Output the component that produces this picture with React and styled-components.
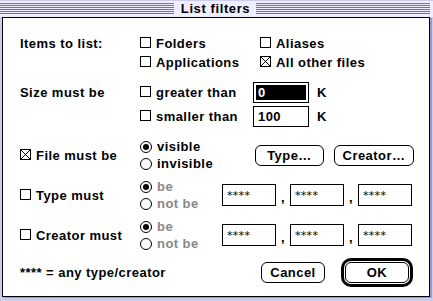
import styled, { createGlobalStyle } from "styled-components";

const GlobalStyle = createGlobalStyle`
  html, body {
    margin: 0;
    padding: 0;
    background: #ccccee;
  }
  * {
    box-sizing: border-box;
  }
`;

const Window = styled.div`
  width: 433px;
  height: 301px;
  background: #ccccee;
  display: flex;
  flex-direction: column;
  font-family: "Liberation Sans", Arial, sans-serif;
  font-weight: bold;
  font-size: 13px;
  letter-spacing: 0.45px;
  color: #000;
`;

const TitleBar = styled.div`
  height: 17px;
  display: flex;
  align-items: center;
  padding: 0 3px 1px 0;
  background: #eeeeff;
  border-top: 1px solid #ccccee;
`;

const Stripes = styled.div`
  flex: 1;
  height: 12px;
  background: repeating-linear-gradient(
    to bottom,
    #777777 0px,
    #777777 1px,
    #eeeeff 1px,
    #eeeeff 2px
  );
`;

const Title = styled.div`
  padding: 0 6px 0 7px;
  line-height: 14px;
  letter-spacing: 0.6px;
`;

const Content = styled.div`
  flex: 1;
  margin: 0 3px 4px 2px;
  background: #fff;
  border: 1px solid #000;
  box-shadow: 2px 1px 0 #9a9acc;
  padding: 0 16px 0 17px;
  display: flex;
  flex-direction: column;
`;

const Section = styled.div`
  display: flex;
  align-items: center;
  margin-top: ${(p) => p.$top}px;
`;

const Label = styled.div`
  width: ${(p) => p.$w || 120}px;
  flex-shrink: 0;
  display: flex;
  align-items: center;
  align-self: ${(p) => (p.$start ? "flex-start" : "center")};
  height: ${(p) => (p.$h ? p.$h + "px" : "auto")};
`;

const ItemGrid = styled.div`
  display: grid;
  grid-template-columns: 120px auto;
  grid-auto-rows: 19px;
  align-items: center;
`;

const SizeGrid = styled.div`
  display: grid;
  grid-template-columns: 120px 113px 56px auto;
  grid-template-rows: 21px 21px;
  row-gap: 3px;
  align-items: center;
`;

const Option = styled.label`
  display: flex;
  align-items: center;
  gap: 5px;
  white-space: nowrap;
  color: ${(p) => (p.$dim ? "#888888" : "#000")};
`;

const Box = styled.span`
  width: 11px;
  height: 11px;
  border: 1px solid #000;
  background: #fff;
  flex-shrink: 0;
  display: block;
  position: relative;
  top: -1px;
`;

const Circle = styled.span`
  width: 12px;
  height: 12px;
  border: 1px solid #000;
  border-radius: 50%;
  background: #fff;
  flex-shrink: 0;
  display: flex;
  align-items: center;
  justify-content: center;

  &::after {
    content: "";
    display: ${(p) => (p.$on ? "block" : "none")};
    width: 6px;
    height: 6px;
    border-radius: 50%;
    background: #000;
  }
`;

const RadioCol = styled.div`
  width: ${(p) => p.$w}px;
  flex-shrink: 0;
  display: grid;
  grid-auto-rows: 17px;
  align-items: center;
`;

const Field = styled.div`
  height: ${(p) => p.$h || 21}px;
  border: 1px solid #000;
  padding: 2px;
  display: flex;
`;

const FieldText = styled.div`
  flex: 1;
  display: flex;
  align-items: center;
  padding-left: 2px;
  background: ${(p) => (p.$selected ? "#000" : "#fff")};
  color: ${(p) => (p.$selected ? "#fff" : "#000")};
  font-weight: ${(p) => (p.$thin ? "normal" : "bold")};
  font-size: ${(p) => (p.$thin ? "11px" : "13px")};
  font-family: ${(p) =>
    p.$thin ? '"DejaVu Sans", Verdana, sans-serif' : "inherit"};
  letter-spacing: ${(p) => (p.$thin ? "0.3px" : "0.45px")};
`;

const Unit = styled.span`
  padding-left: 8px;
`;

const CodeFields = styled.div`
  width: 190px;
  display: grid;
  grid-template-columns: 1fr 14px 1fr 14px 1fr;
  align-items: center;
`;

const Comma = styled.span`
  text-align: center;
  padding-top: 4px;
`;

const Buttons = styled.div`
  display: flex;
  align-items: center;
  gap: ${(p) => p.$gap}px;
  margin-left: ${(p) => p.$left || 0}px;
`;

const Button = styled.button`
  width: ${(p) => p.$w}px;
  height: 21px;
  border: 1px solid #000;
  border-radius: 6px;
  background: #fff;
  font: inherit;
  letter-spacing: inherit;
  color: #000;
  padding: 0;
  display: flex;
  align-items: center;
  justify-content: center;
`;

const DefaultRing = styled.div`
  border: 3px solid #000;
  border-radius: 10px;
  padding: 1px;
  display: flex;
`;

const Footer = styled.div`
  margin-top: 6px;
  height: 28px;
  display: flex;
  align-items: center;
  justify-content: space-between;
`;

const Note = styled.span`
  font-weight: bold;
`;

function Check({ on }) {
  return (
    <Box>
      {on && (
        <svg
          width="9"
          height="9"
          viewBox="0 0 9 9"
          style={{ position: "absolute", left: 0, top: 0 }}
        >
          <path d="M0 0L9 9M9 0L0 9" stroke="#000" strokeWidth="1" />
        </svg>
      )}
    </Box>
  );
}

function CheckOption({ on, children }) {
  return (
    <Option>
      <Check on={on} />
      {children}
    </Option>
  );
}

function Radio({ on, dim, children }) {
  return (
    <Option $dim={dim}>
      <Circle $on={on} />
      {children}
    </Option>
  );
}

function CodeRow({ label }) {
  return (
    <Section $top={6}>
      <Label>
        <CheckOption>{label}</CheckOption>
      </Label>
      <RadioCol $w={82}>
        <Radio on dim>
          be
        </Radio>
        <Radio dim>not be</Radio>
      </RadioCol>
      <CodeFields>
        {["****", ",", "****", ",", "****"].map((t, i) =>
          t === "," ? (
            <Comma key={i}>,</Comma>
          ) : (
            <Field key={i} $h={22}>
              <FieldText $thin>{t}</FieldText>
            </Field>
          )
        )}
      </CodeFields>
    </Section>
  );
}

export default function App() {
  return (
    <>
      <GlobalStyle />
      <Window>
        <TitleBar>
          <Stripes />
          <Title>List filters</Title>
          <Stripes />
        </TitleBar>

        <Content>
          <Section $top={16}>
            <Label $start $h={19}>
              Items to list:
            </Label>
            <ItemGrid>
              <CheckOption>Folders</CheckOption>
              <CheckOption>Aliases</CheckOption>
              <CheckOption>Applications</CheckOption>
              <CheckOption on>All other files</CheckOption>
            </ItemGrid>
          </Section>

          <Section $top={10}>
            <SizeGrid>
              <span>Size must be</span>
              <CheckOption>greater than</CheckOption>
              <Field>
                <FieldText $selected>0</FieldText>
              </Field>
              <Unit>K</Unit>
              <span />
              <CheckOption>smaller than</CheckOption>
              <Field>
                <FieldText>100</FieldText>
              </Field>
              <Unit>K</Unit>
            </SizeGrid>
          </Section>

          <Section $top={11}>
            <Label>
              <CheckOption on>File must be</CheckOption>
            </Label>
            <RadioCol $w={113}>
              <Radio on>visible</Radio>
              <Radio>invisible</Radio>
            </RadioCol>
            <Buttons $gap={10} $left={2}>
              <Button $w={69}>Type…</Button>
              <Button $w={80}>Creator…</Button>
            </Buttons>
          </Section>

          <CodeRow label="Type must" />
          <CodeRow label="Creator must" />

          <Footer>
            <Note>**** = any type/creator</Note>
            <Buttons $gap={16}>
              <Button $w={64}>Cancel</Button>
              <DefaultRing>
                <Button $w={64}>OK</Button>
              </DefaultRing>
            </Buttons>
          </Footer>
        </Content>
      </Window>
    </>
  );
}
